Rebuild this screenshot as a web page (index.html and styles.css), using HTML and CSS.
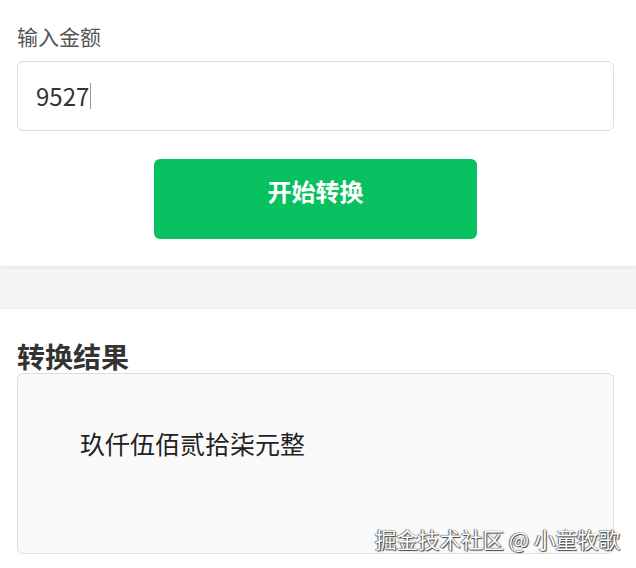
FILE: index.html
```html
<!DOCTYPE html>
<html lang="zh">
<head>
<meta charset="utf-8">
<title>金额转换</title>
<link rel="stylesheet" href="styles.css">
</head>
<body>
<section class="top">
  <div class="label">输入金额</div>
  <div class="input"><span class="value">9527</span><span class="caret"></span></div>
  <div class="btn-row"><button class="btn">开始转换</button></div>
</section>
<div class="band"></div>
<section class="result">
  <h2 class="title">转换结果</h2>
  <div class="box">玖仟伍佰贰拾柒元整</div>
</section>
<div class="watermark">掘金技术社区 @ 小童牧歌</div>
</body>
</html>
```
FILE: styles.css
```css
html, body {
  margin: 0;
  padding: 0;
  background: #fff;
  font-family: "Noto Sans CJK SC", "Noto Sans", sans-serif;
  width: 636px;
  height: 568px;
  overflow: hidden;
  position: relative;
}
.top {
  background: #fff;
  padding: 22px 22px 27px 17px;
  box-shadow: 0 2px 4px rgba(0,0,0,0.06);
  position: relative;
  z-index: 1;
}
.label {
  font-size: 21px;
  line-height: 28px;
  color: #555;
  margin-bottom: 11px;
}
.input {
  box-sizing: border-box;
  height: 70px;
  border: 1px solid #dedede;
  border-radius: 6px;
  display: flex;
  align-items: center;
  padding-left: 18px;
}
.value {
  font-size: 24px;
  color: #333;
  line-height: 30px;
}
.caret {
  display: inline-block;
  width: 1px;
  height: 26px;
  background: #999;
  margin-left: 1px;
}
.btn-row {
  display: flex;
  justify-content: center;
  margin-top: 28px;
}
.btn {
  flex: 0 0 323px;
  height: 80px;
  border: none;
  border-radius: 6px;
  background: #07c160;
  color: #fff;
  font-family: inherit;
  font-size: 24px;
  font-weight: bold;
  padding: 0 0 18px 0;
}
.band {
  height: 42px;
  background: #f5f5f5;
  border-bottom: 1px solid #ececec;
}
.result {
  padding: 30px 22px 0 17px;
}
.title {
  margin: 0;
  font-size: 28px;
  line-height: 34px;
  font-weight: bold;
  color: #333;
}
.box {
  box-sizing: border-box;
  height: 181px;
  background: #fafafa;
  border: 1px solid #dedede;
  border-radius: 6px;
  padding: 52px 0 0 62px;
  font-size: 25px;
  line-height: 34px;
  color: #222;
}
.watermark {
  position: absolute;
  right: 16px;
  top: 524px;
  font-size: 21.5px;
  line-height: 30px;
  color: #fff;
  text-shadow: 0 0 1px #333, 1px 1px 1px #444, -1px 0 1px #777;
}
```
